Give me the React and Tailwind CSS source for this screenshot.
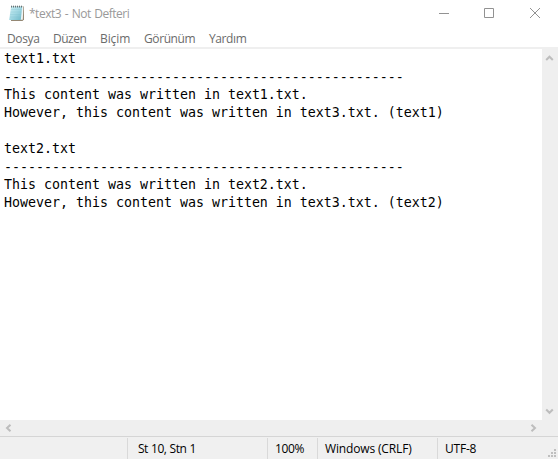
const menus = [
  { label: "Dosya", style: "w-[46px] tracking-[-0.35px]" },
  { label: "Düzen", style: "w-[47px] tracking-[-0.5px]" },
  { label: "Biçim", style: "w-[44px] tracking-[-0.1px]" },
  { label: "Görünüm", style: "w-[65px] tracking-[-0.4px]" },
  { label: "Yardım", style: "w-[50px] tracking-[-0.4px]" },
];

const rule = "-".repeat(50);

const lines = [
  "text1.txt",
  rule,
  "This content was written in text1.txt.",
  "However, this content was written in text3.txt. (text1)",
  "",
  "text2.txt",
  rule,
  "This content was written in text2.txt.",
  "However, this content was written in text3.txt. (text2)",
];

function NotepadIcon() {
  return (
    <svg className="ml-2 h-[18px] w-[17px] shrink-0" viewBox="0 0 17 18">
      <defs>
        <linearGradient id="page" x1="0" y1="0" x2="1" y2="1">
          <stop offset="0" stopColor="#cdeff4" />
          <stop offset="0.5" stopColor="#a2d8e3" />
          <stop offset="1" stopColor="#6db8c8" />
        </linearGradient>
      </defs>
      <path d="M4 1.5H16V14.5L14.5 16H3Z" fill="#958874" />
      <path d="M3.5 1.5H15.4L14.8 14.8H2Z" fill="#eef4f4" />
      <path d="M3 1.8H14.2L12.8 15H1.2Z" fill="url(#page)" />
      <path d="M3 4.5H13.5M2.7 7H13.3M2.3 9.5H13M2 12H12.6" stroke="#7dbfcd" strokeWidth="0.5" opacity="0.5" />
      <path d="M3.5 0.7V2.5M5.5 0.7V2.5M7.5 0.7V2.5M9.5 0.7V2.5M11.5 0.7V2.5M13.5 0.7V2.5" stroke="#53666c" strokeWidth="0.9" />
    </svg>
  );
}

function Chevron({ d }) {
  return (
    <svg className="h-[17px] w-[17px] shrink-0" viewBox="0 0 17 17">
      <path d={d} fill="none" stroke="#bdbdbd" strokeWidth="2" />
    </svg>
  );
}

export default function App() {
  return (
    <div className="flex h-[459px] w-[558px] flex-col overflow-hidden bg-white font-['Open_Sans','Noto_Sans',sans-serif] text-[12px]">
      <header className="flex h-[28px] shrink-0 items-center">
        <NotepadIcon />
        <span className="ml-1 flex-1 whitespace-nowrap tracking-[-0.5px] text-[#999] [word-spacing:1px]">*text3 - Not Defteri</span>
        <svg className="h-[28px] w-[136px] shrink-0" viewBox="0 0 136 28" fill="none" stroke="#929292" strokeWidth="1">
          <path d="M17 13.5H27M62.5 8.5H71.5V17.5H62.5ZM108 8L118 18M118 8L108 18" />
        </svg>
      </header>
      <nav className="flex h-[19px] shrink-0 items-center pl-[7px] pt-[3px] text-[#6b6b6b]">
        {menus.map((m) => (
          <span key={m.label} className={m.style}>{m.label}</span>
        ))}
      </nav>
      <main className="flex h-[373px] shrink-0 border-t-2 border-[#efefef]">
        <div className="flex-1 whitespace-pre pl-1 pt-px font-['DejaVu_Sans_Mono',monospace] text-[13.29px] leading-[18px] text-black">
          {lines.map((line, i) => (
            <div key={i} className={line === rule ? "h-[18px] pt-px" : "h-[18px]"}>{line}</div>
          ))}
        </div>
        <div className="flex w-4 flex-col justify-between bg-[#efefef]">
          <Chevron d="M4.2 11L7.5 7.7L10.8 11" />
          <Chevron d="M4.2 6.5L7.5 9.8L10.8 6.5" />
        </div>
      </main>
      <div className="flex h-4 shrink-0 items-center justify-between bg-[#efefef] pr-4">
        <Chevron d="M10.5 4.7L7 8L10.5 11.3" />
        <Chevron d="M6.5 4.7L10 8L6.5 11.3" />
      </div>
      <footer className="flex h-[23px] shrink-0 border-t border-[#d5d5d5] bg-[#f0f0f0] leading-[22px] text-black">
        <div className="w-[127px]" />
        <div className="mt-px h-[21px] w-[140px] border-l border-[#d9d9d9] pl-[10px] tracking-[-0.5px] [word-spacing:0.6px]">St 10, Stn 1</div>
        <div className="mt-px h-[21px] w-[50px] border-l border-[#d9d9d9] pl-[7px] tracking-[-0.4px]">100%</div>
        <div className="mt-px h-[21px] w-[120px] border-l border-[#d9d9d9] pl-[7px] tracking-[-0.15px]">Windows (CRLF)</div>
        <div className="mt-px h-[21px] flex-1 border-l border-[#d9d9d9] pl-[7px] tracking-[-0.2px]">UTF-8</div>
        <svg className="h-[22px] w-[12px]" viewBox="0 0 12 22" fill="#bfbfbf">
          <path d="M8 12h2v2h-2zM5 15h2v2h-2zM8 15h2v2h-2zM2 18h2v2h-2zM5 18h2v2h-2zM8 18h2v2h-2z" />
        </svg>
      </footer>
    </div>
  );
}
